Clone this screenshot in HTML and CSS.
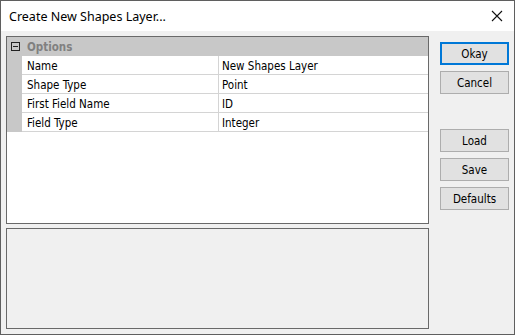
FILE: index.html
```html
<!DOCTYPE html>
<html lang="en">
<head>
    <meta charset="UTF-8">
    <title>Create New Shapes Layer...</title>
    <link rel="stylesheet" href="styles.css">
</head>
<body>
    <div class="window">
        <div class="titlebar">
            <span class="title">Create New Shapes Layer...</span>
            <span class="close">
                <svg width="12" height="12" viewBox="0 0 12 12">
                    <path d="M1 1 L11 11 M11 1 L1 11" stroke="#111" stroke-width="1.1" fill="none"/>
                </svg>
            </span>
        </div>
        <div class="content">
            <div class="left-col">
                <div class="grid-panel">
                    <div class="grid-header">
                        <span class="toggle">
                            <svg width="9" height="9" viewBox="0 0 9 9">
                                <rect x="0.5" y="0.5" width="8" height="8" fill="none" stroke="#222"/>
                                <path d="M2 4.5 H7" stroke="#222"/>
                            </svg>
                        </span>
                        <span class="group-name">Options</span>
                    </div>
                    <div class="grid-row">
                        <div class="cell-name">Name</div>
                        <div class="cell-value">New Shapes Layer</div>
                    </div>
                    <div class="grid-row">
                        <div class="cell-name">Shape Type</div>
                        <div class="cell-value">Point</div>
                    </div>
                    <div class="grid-row">
                        <div class="cell-name">First Field Name</div>
                        <div class="cell-value">ID</div>
                    </div>
                    <div class="grid-row">
                        <div class="cell-name">Field Type</div>
                        <div class="cell-value">Integer</div>
                    </div>
                </div>
                <div class="desc-panel"></div>
            </div>
            <div class="buttons">
                <button class="btn btn-default">Okay</button>
                <button class="btn">Cancel</button>
                <div class="btn-spacer"></div>
                <button class="btn">Load</button>
                <button class="btn">Save</button>
                <button class="btn">Defaults</button>
            </div>
        </div>
    </div>
</body>
</html>
```

FILE: styles.css
```css
body {
    margin: 0;
    background: #fff;
}

.window {
    width: 515px;
    height: 335px;
    box-sizing: border-box;
    border: 1px solid #5f5f5f;
    display: flex;
    flex-direction: column;
    background: #f0f0f0;
}

.titlebar {
    height: 30px;
    background: #fff;
    display: flex;
    align-items: center;
    justify-content: space-between;
    padding: 0 10px 0 8px;
    font-family: "Noto Sans", sans-serif;
    font-size: 12.5px;
    color: #000;
}

.close {
    display: flex;
    margin-right: 1px;
}

.content {
    flex: 1;
    display: flex;
    padding: 5px;
    gap: 11px;
}

.left-col {
    width: 423px;
    display: flex;
    flex-direction: column;
    gap: 4px;
}

.grid-panel {
    height: 188px;
    box-sizing: border-box;
    border: 1px solid #696969;
    background: #fff;
    font-family: "DejaVu Sans Condensed", "DejaVu Sans", sans-serif;
    font-size: 11.5px;
    color: #000;
}

.grid-header {
    height: 19px;
    background: #c8c8c8;
    display: flex;
    align-items: center;
}

.toggle {
    width: 15px;
    display: flex;
    justify-content: center;
    padding-left: 1px;
}

.group-name {
    font-weight: bold;
    color: #808080;
    padding-left: 4px;
}

.grid-row {
    height: 19px;
    display: flex;
    border-left: 15px solid #c8c8c8;
}

.cell-name,
.cell-value {
    box-sizing: border-box;
    border-bottom: 1px solid #d4d4d4;
    display: flex;
    align-items: center;
    padding-top: 1px;
}

.cell-name {
    width: 197px;
    padding-left: 5px;
    border-right: 1px solid #d4d4d4;
}

.cell-value {
    flex: 1;
    padding-left: 3px;
}

.desc-panel {
    flex: 1;
    box-sizing: border-box;
    border: 1px solid #696969;
    background: #f0f0f0;
}

.buttons {
    width: 69px;
    display: flex;
    flex-direction: column;
    gap: 6px;
    padding-top: 6px;
}

.btn {
    height: 23px;
    box-sizing: border-box;
    margin: 0;
    padding: 0;
    background: #e1e1e1;
    border: 1px solid #adadad;
    font-family: "DejaVu Sans Condensed", "DejaVu Sans", sans-serif;
    font-size: 11.5px;
    color: #000;
}

.btn-default {
    border: 2px solid #0078d7;
}

.btn-spacer {
    height: 23px;
}
```
